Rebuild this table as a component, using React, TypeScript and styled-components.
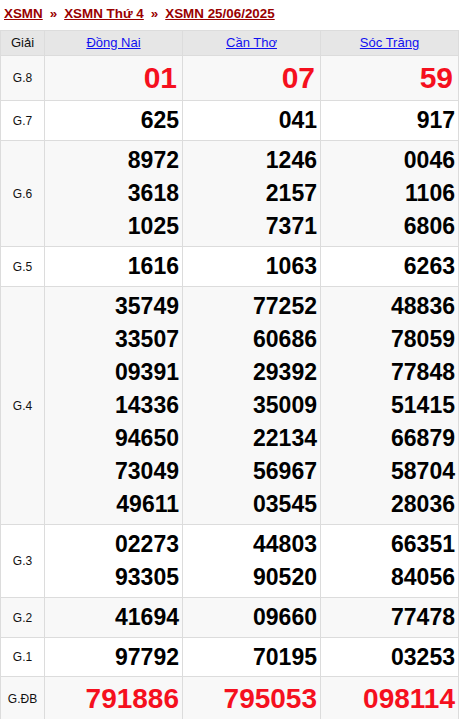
import React from "react";
import styled, { createGlobalStyle } from "styled-components";

const GlobalStyle = createGlobalStyle`
    body {
        margin: 0;
        background: #fff;
        font-family: "Liberation Sans", Arial, sans-serif;
    }
`

const Breadcrumb = styled.div`
    padding: 5px 4px;
    height: 20px;
    line-height: 17px;
    font-size: 13.4px;
    font-weight: bold;
    color: #990000;
`

const CrumbLink = styled.a`
    color: #990000;
    text-decoration: underline;
`

const Sep = styled.span`
    padding: 0 7px;
`

const Table = styled.table`
    width: 458px;
    border-collapse: collapse;
    table-layout: fixed;
`

const HeadCell = styled.th<{ $w: number }>`
    width: ${(p) => p.$w}px;
    height: 16px;
    padding: 4px 0;
    line-height: 16px;
    background: #e6e6e6;
    border: 1px solid #dcdcdc;
    font-size: 13px;
    font-weight: normal;
    color: #111;
    text-align: center;
`

const ProvinceLink = styled.a`
    color: #1010f0;
    text-decoration: underline;
`

const Row = styled.tr<{ $alt: boolean }>`
    background: ${(p) => (p.$alt ? "#f8f8f8" : "#fff")};
`

const PrizeCell = styled.td`
    border: 1px solid #dcdcdc;
    font-size: 12px;
    color: #111;
    text-align: center;
    vertical-align: middle;
`

const NumCell = styled.td<{ $big: boolean }>`
    border: 1px solid #dcdcdc;
    padding: 3px ${(p) => (p.$big ? "5px" : "3px")} 3px 0;
    text-align: right;
    vertical-align: middle;
`

const Num = styled.div<{ $size: number; $red: boolean; $lh: number }>`
    font-size: ${(p) => p.$size}px;
    line-height: ${(p) => p.$lh}px;
    font-weight: bold;
    color: ${(p) => (p.$red ? "#f5101e" : "#000")};
`

type Prize = {
    name: string;
    values: string[][];
    size: number;
    lh: number;
    red?: boolean;
    big?: boolean;
};

const provinces = ["Đồng Nai", "Cần Thơ", "Sóc Trăng"];

const prizes: Prize[] = [
    { name: "G.8", values: [["01"], ["07"], ["59"]], size: 30, lh: 38, red: true, big: true },
    { name: "G.7", values: [["625"], ["041"], ["917"]], size: 23, lh: 33 },
    {
        name: "G.6",
        values: [
            ["8972", "3618", "1025"],
            ["1246", "2157", "7371"],
            ["0046", "1106", "6806"],
        ],
        size: 23,
        lh: 33,
    },
    { name: "G.5", values: [["1616"], ["1063"], ["6263"]], size: 23, lh: 33 },
    {
        name: "G.4",
        values: [
            ["35749", "33507", "09391", "14336", "94650", "73049", "49611"],
            ["77252", "60686", "29392", "35009", "22134", "56967", "03545"],
            ["48836", "78059", "77848", "51415", "66879", "58704", "28036"],
        ],
        size: 23,
        lh: 33,
    },
    {
        name: "G.3",
        values: [
            ["02273", "93305"],
            ["44803", "90520"],
            ["66351", "84056"],
        ],
        size: 23,
        lh: 33,
    },
    { name: "G.2", values: [["41694"], ["09660"], ["77478"]], size: 23, lh: 33 },
    { name: "G.1", values: [["97792"], ["70195"], ["03253"]], size: 23, lh: 32 },
    { name: "G.ĐB", values: [["791886"], ["795053"], ["098114"]], size: 28, lh: 38, red: true },
];

const App: React.FC = () => {
    return (
        <>
            <GlobalStyle />
            <Breadcrumb>
                <CrumbLink href="#">XSMN</CrumbLink>
                <Sep>»</Sep>
                <CrumbLink href="#">XSMN Thứ 4</CrumbLink>
                <Sep>»</Sep>
                <CrumbLink href="#">XSMN 25/06/2025</CrumbLink>
            </Breadcrumb>
            <Table>
                <thead>
                    <tr>
                        <HeadCell $w={43}>Giải</HeadCell>
                        {provinces.map((p) => (
                            <HeadCell $w={137} key={p}>
                                <ProvinceLink href="#">{p}</ProvinceLink>
                            </HeadCell>
                        ))}
                    </tr>
                </thead>
                <tbody>
                    {prizes.map((prize, i) => (
                        <Row $alt={i % 2 === 0} key={prize.name}>
                            <PrizeCell>{prize.name}</PrizeCell>
                            {prize.values.map((col, j) => (
                                <NumCell $big={!!prize.big} key={j}>
                                    {col.map((v) => (
                                        <Num $size={prize.size} $lh={prize.lh} $red={!!prize.red} key={v}>
                                            {v}
                                        </Num>
                                    ))}
                                </NumCell>
                            ))}
                        </Row>
                    ))}
                </tbody>
            </Table>
        </>
    );
};

export default App;
